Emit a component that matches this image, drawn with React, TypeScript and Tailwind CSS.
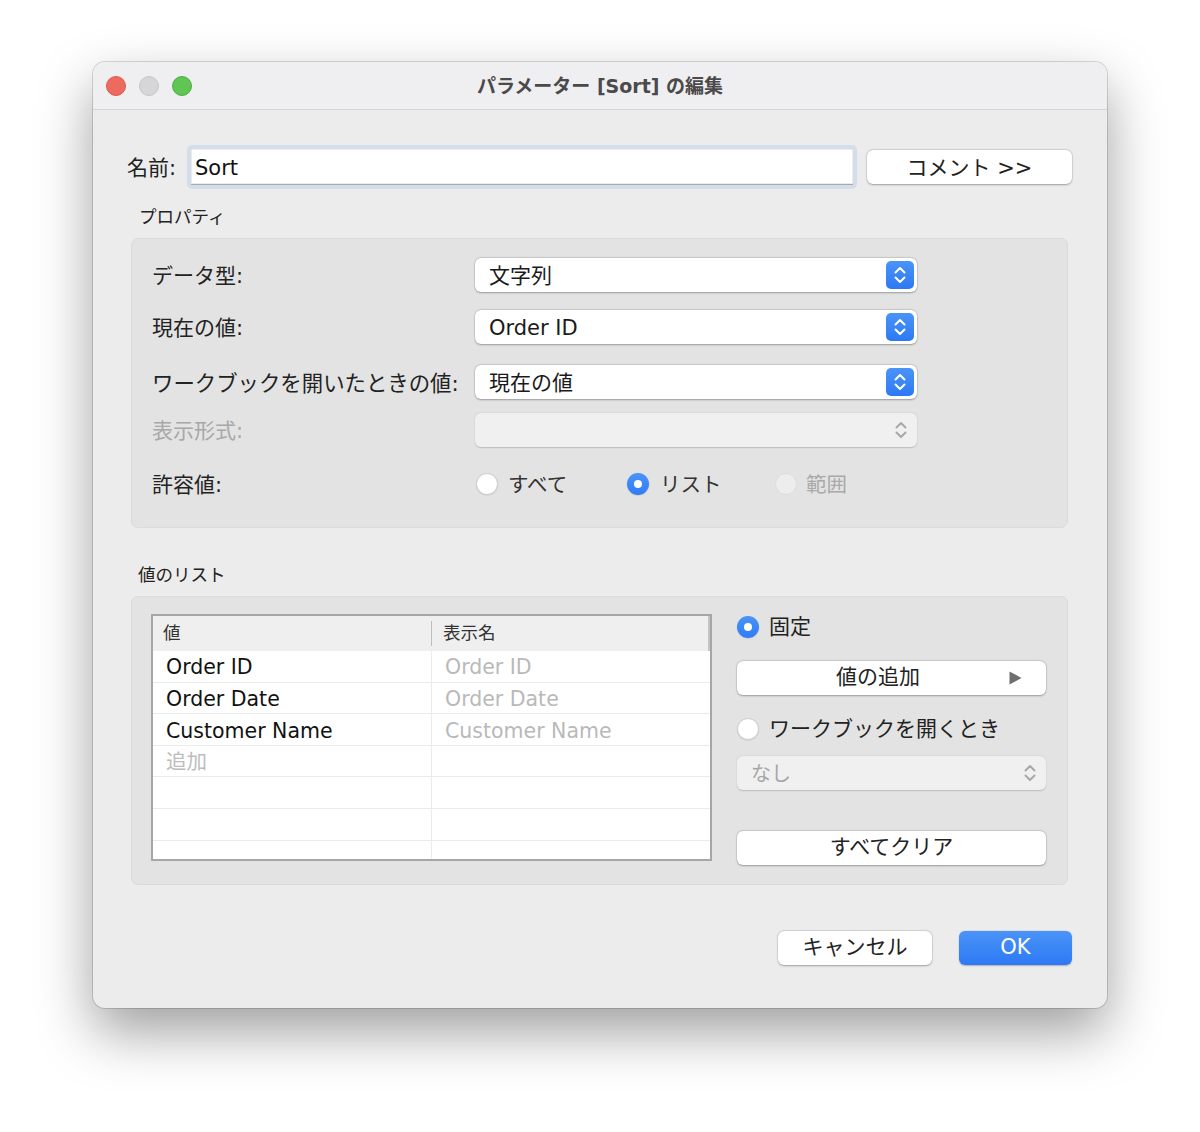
import React from "react";

const font = "font-['DejaVu_Sans','Noto_Sans_CJK_JP',sans-serif]";

function Chevrons(props: { color: string }) {
    return (
        <svg width="28" height="28" viewBox="0 0 28 28" fill="none">
            <path d="M9.5 11.5 L14 7 L18.5 11.5" stroke={props.color} strokeWidth="2" strokeLinecap="round" strokeLinejoin="round" />
            <path d="M9.5 16.5 L14 21 L18.5 16.5" stroke={props.color} strokeWidth="2" strokeLinecap="round" strokeLinejoin="round" />
        </svg>
    );
}

function Select(props: { value?: string; disabled?: boolean; width: string }) {
    if (props.disabled) {
        return (
            <div className={`${props.width} h-[34px] flex items-center justify-between rounded-[6px] bg-[#f0f0f0] shadow-[0_0.5px_1.5px_rgba(0,0,0,0.18)] pl-[14px] pr-[2px]`}>
                <span className="pt-[2px] text-[20px] text-[#a6a6a6]">{props.value}</span>
                <Chevrons color="#a9a9a9" />
            </div>
        );
    }
    return (
        <div className={`${props.width} h-[34px] flex items-center justify-between rounded-[6px] bg-white shadow-[0_0.5px_2px_rgba(0,0,0,0.3),0_0_0_0.5px_rgba(0,0,0,0.08)] pl-[14px] pr-[3px]`}>
            <span className="pt-[4px] text-[21px] text-[#1a1a1a]">{props.value}</span>
            <div className="w-[28px] h-[28px] rounded-[5px] bg-linear-to-b from-[#4a93f8] to-[#2d79f4] flex items-center justify-center">
                <Chevrons color="#ffffff" />
            </div>
        </div>
    );
}

function Radio(props: { state: "on" | "off" | "disabled" }) {
    if (props.state === "on") {
        return (
            <div className="w-[22px] h-[22px] shrink-0 rounded-full bg-linear-to-b from-[#4a93f8] to-[#2f7cf5] flex items-center justify-center shadow-[0_0.5px_1px_rgba(0,0,0,0.2)]">
                <div className="w-[8px] h-[8px] rounded-full bg-white" />
            </div>
        );
    }
    if (props.state === "disabled") {
        return <div className="w-[22px] h-[22px] shrink-0 rounded-full bg-[#ededed] border border-[#dedede]" />;
    }
    return <div className="w-[22px] h-[22px] shrink-0 rounded-full bg-white border border-[#cfcfcf] shadow-[0_0.5px_1px_rgba(0,0,0,0.12)]" />;
}

function Button(props: { children: React.ReactNode; width: string; className?: string }) {
    return (
        <div className={`${props.width} h-[34px] rounded-[6px] bg-white shadow-[0_0.5px_2px_rgba(0,0,0,0.3),0_0_0_0.5px_rgba(0,0,0,0.08)] flex items-center justify-center text-[21px] text-[#222] ${props.className ?? ""}`}>
            {props.children}
        </div>
    );
}

const rows = [
    { value: "Order ID", display: "Order ID" },
    { value: "Order Date", display: "Order Date" },
    { value: "Customer Name", display: "Customer Name" },
    { value: "追加", display: "", placeholder: true },
    { value: "", display: "" },
    { value: "", display: "" },
    { value: "", display: "" },
];

export default function App() {
    return (
        <div className={`w-[1200px] h-[1132px] bg-white pt-[62px] pl-[93px] ${font}`}>
            <div className="w-[1014px] h-[946px] rounded-[12px] bg-[#ececec] overflow-hidden shadow-[0_24px_55px_rgba(0,0,0,0.38),0_0_0_1px_rgba(0,0,0,0.14)]">
                {/* title bar */}
                <div className="relative h-[48px] bg-[#efeef0] border-b border-[#d4d4d4] flex items-center justify-center">
                    <div className="absolute left-[13px] top-[14px] flex gap-[13px]">
                        <div className="w-[20px] h-[20px] rounded-full bg-[#ee6a5e] border border-[#d85a50]" />
                        <div className="w-[20px] h-[20px] rounded-full bg-[#d6d5d8] border border-[#c6c5c8]" />
                        <div className="w-[20px] h-[20px] rounded-full bg-[#5fc553] border border-[#4fae45]" />
                    </div>
                    <span className="pt-[2px] text-[19px] font-bold text-[#4a4a4a]">パラメーター [Sort] の編集</span>
                </div>

                <div className="flex flex-col">
                    {/* name row */}
                    <div className="mt-[35px] h-[44px] flex items-center pl-[34px]">
                        <span className="w-[60px] pt-[4px] text-[21px] text-[#222]">名前:</span>
                        <div className="w-[670px] h-[44px] rounded-[5px] bg-[#d4ddea] p-[4px]">
                            <div className="h-full bg-white border-b border-[#a9a9a9] shadow-[inset_0_0_0_0.5px_rgba(0,0,0,0.15)] flex items-center pl-[4px] pt-[4px] text-[21px] text-[#111]">
                                Sort
                            </div>
                        </div>
                        <Button width="w-[205px]" className="ml-[10px] pt-[4px]">コメント &gt;&gt;</Button>
                    </div>

                    <div className="mt-[16px] h-[22px] pt-[3px] pl-[46px] flex items-center text-[17.5px] text-[#222]">プロパティ</div>

                    {/* properties panel */}
                    <div className="mt-[11px] ml-[38px] w-[937px] h-[290px] rounded-[7px] bg-[#e3e3e3] border border-[#dadada] pl-[20px] pt-[19px] flex flex-col">
                        <div className="h-[34px] flex items-center">
                            <span className="w-[323px] pt-[4px] text-[21px] text-[#222]">データ型:</span>
                            <Select value="文字列" width="w-[442px]" />
                        </div>
                        <div className="mt-[18px] h-[34px] flex items-center">
                            <span className="w-[323px] pt-[4px] text-[21px] text-[#222]">現在の値:</span>
                            <Select value="Order ID" width="w-[442px]" />
                        </div>
                        <div className="mt-[21px] h-[34px] flex items-center">
                            <span className="w-[323px] pt-[4px] text-[21.4px] text-[#222]">ワークブックを開いたときの値:</span>
                            <Select value="現在の値" width="w-[442px]" />
                        </div>
                        <div className="mt-[14px] h-[34px] flex items-center">
                            <span className="w-[323px] pt-[4px] text-[21px] text-[#a8a8a8]">表示形式:</span>
                            <Select disabled width="w-[442px]" />
                        </div>
                        <div className="mt-[20px] h-[34px] flex items-center">
                            <span className="w-[324px] pt-[4px] text-[21px] text-[#222]">許容値:</span>
                            <div className="w-[151px] flex items-center gap-[10px]">
                                <Radio state="off" />
                                <span className="pt-[3px] text-[20.5px] text-[#333]">すべて</span>
                            </div>
                            <div className="w-[148px] flex items-center gap-[11px]">
                                <Radio state="on" />
                                <span className="pt-[3px] text-[20.5px] text-[#333]">リスト</span>
                            </div>
                            <div className="flex items-center gap-[9px]">
                                <Radio state="disabled" />
                                <span className="pt-[3px] text-[20.5px] text-[#a9a9a9]">範囲</span>
                            </div>
                        </div>
                    </div>

                    <div className="mt-[35px] h-[22px] pt-[3px] pl-[45px] flex items-center text-[17.5px] text-[#222]">値のリスト</div>

                    {/* list panel */}
                    <div className="mt-[11px] ml-[38px] w-[937px] h-[289px] rounded-[7px] bg-[#e3e3e3] border border-[#dadada] pl-[19px] pt-[17px] flex">
                        <div className="w-[561px] h-[247px] border-2 border-[#a6a6a6] bg-white overflow-hidden flex flex-col">
                            <div className="h-[35px] shrink-0 bg-[#efefef] flex items-center text-[17.5px] text-[#333]">
                                <div className="w-[279px] pl-[10px] h-[25px] flex items-center border-r border-[#bdbdbd]">値</div>
                                <div className="flex-1 pl-[11px] h-full flex items-center border-r-2 border-[#c4c4c4]">表示名</div>
                            </div>
                            {rows.map((row, index) => (
                                <div key={index} className="h-[31.6px] shrink-0 flex border-b border-[#ebebeb] text-[20.5px]">
                                    <div className={`w-[279px] pl-[13px] pt-[3px] flex items-center border-r border-[#ebebeb] ${row.placeholder ? "text-[#bdbdbd]" : "text-[#111]"}`}>
                                        {row.value}
                                    </div>
                                    <div className="flex-1 pl-[13px] pt-[3px] flex items-center text-[#b9b9b9]">{row.display}</div>
                                </div>
                            ))}
                        </div>

                        <div className="ml-[25px] w-[309px] flex flex-col">
                            <div className="mt-[2px] h-[22px] flex items-center gap-[10px]">
                                <Radio state="on" />
                                <span className="pt-[1px] text-[21px] text-[#222]">固定</span>
                            </div>
                            <div className="mt-[23px] relative">
                                <Button width="w-[309px]" className="pr-[27px]">値の追加</Button>
                                <svg className="absolute right-[24px] top-[10px]" width="13" height="14" viewBox="0 0 13 14">
                                    <path d="M0.5 0.5 L12.5 7 L0.5 13.5 Z" fill="#6f6f6f" />
                                </svg>
                            </div>
                            <div className="mt-[23px] h-[22px] flex items-center gap-[10px]">
                                <Radio state="off" />
                                <span className="pt-[1px] text-[21px] text-[#222]">ワークブックを開くとき</span>
                            </div>
                            <div className="mt-[16px]">
                                <Select disabled value="なし" width="w-[309px]" />
                            </div>
                            <div className="mt-[41px]">
                                <Button width="w-[309px]">すべてクリア</Button>
                            </div>
                        </div>
                    </div>

                    {/* footer buttons */}
                    <div className="mt-[46px] pr-[35px] flex justify-end gap-[27px]">
                        <Button width="w-[154px]">キャンセル</Button>
                        <div className="w-[113px] h-[34px] rounded-[6px] bg-linear-to-b from-[#4a93f8] to-[#2d79f4] shadow-[0_0.5px_1.5px_rgba(0,0,0,0.25)] flex items-center justify-center text-[21px] text-white">
                            OK
                        </div>
                    </div>
                </div>
            </div>
        </div>
    );
}
